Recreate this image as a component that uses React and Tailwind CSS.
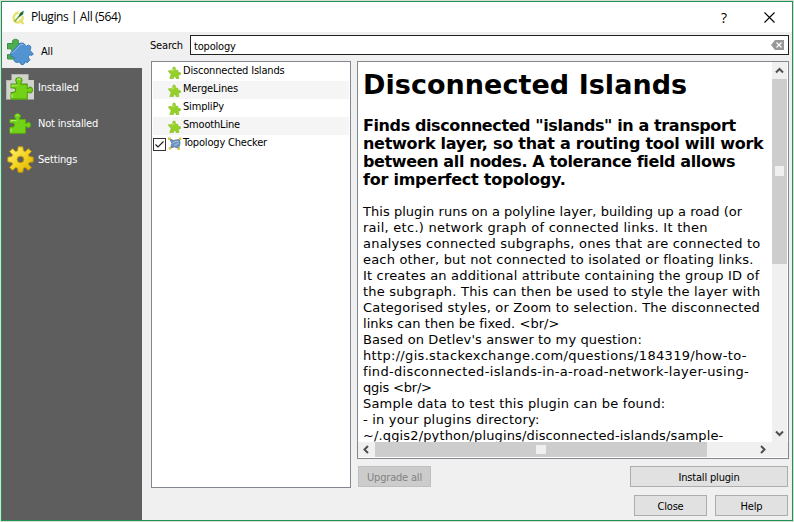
const ui = "font-['DejaVu_Sans_Condensed','DejaVu_Sans',sans-serif] [font-stretch:condensed] text-[11px] leading-[18px] tracking-[-0.18px] whitespace-nowrap";

const PUZZLE =
  "M1 6.5 H6.5 C7 5 5.5 4.5 5.5 3 C5.5 0 11.5 0 11.5 3 C11.5 4.5 10 5 10.5 6.5 H16.5 V10.5 C18 11 18 9 20 9.3 C22 10 22 14 20 14.5 C18 15 18 13 16.5 13.8 V20.3 H1 V14.5 C3 13.5 5.5 15 5.5 12 C5.5 9 3 10.5 1 9.8 Z";

function PuzzleIcon() {
  return (
    <svg className="h-[22px] w-[22px]" viewBox="0 0 22 22">
      <path d={PUZZLE} fill="#73d216" stroke="#58b010" />
      <path d="M2 9 V7.5 H7.5 M6.8 2.8 Q8.5 0.8 10 2.5 M2 15.5 V19.3" fill="none" stroke="#b4f070" />
    </svg>
  );
}

function SmallPuzzle() {
  return (
    <svg className="h-[13px] w-[13px]" viewBox="0 0 13 13">
      <path
        d="M5 4.2 C3.4 -0.2 8.6 -0.2 7.2 4.2 H10 L9.8 6.6 C13.6 5.2 13.6 10 10 8.8 L11 12.5 H8 C8 9.8 5.6 9.8 5.6 12.5 H1.8 L2.8 9.2 C4 7.4 1 7.8 0.4 4.8 Z"
        fill="#94cf2a"
        stroke="#84c01e"
        strokeWidth="0.6"
      />
      <path d="M5.4 2.4 L6 4.8 H2.4" fill="none" stroke="#b9e65c" strokeWidth="0.8" />
    </svg>
  );
}

function AllIcon() {
  return (
    <svg className="h-7 w-7" viewBox="0 0 28 28">
      <path d="M1.5 5.5 H7 C5.5 3 7 1.3 9.5 1.3 C12 1.3 13.5 3 12 5.5 H17 V21 H1.5 V16.5 C4 17 6 16.5 6 13.5 C6 10.5 4 10.5 1.5 11 Z" fill="#4fae54" stroke="#35903f" />
      <path
        d="M14.5 5 L17.5 5.3 L20.5 8.2 C22 6 26 7.5 24.5 11 L23.8 12.2 L27.3 16 L25.8 17.5 C23.5 16 21.5 18 22.8 20.3 L24 21.8 L21.5 24.5 L18.8 23.8 C19 27 15 27.6 14.3 25.4 L13.8 24 L10 24.4 L7.8 22.4 C9.3 19.5 7.5 18 5 18.8 L4.6 15 Z"
        fill="#5294d2"
        stroke="#3a78b8"
      />
      <path d="M6 15.3 L14.8 6.3 L17 6.5" fill="none" stroke="#93c0ea" />
    </svg>
  );
}

function InstalledIcon() {
  return (
    <svg className="h-7 w-7" viewBox="0 0 28 28">
      <path d="M5.5 0.5 H22.5 V6 H28 V25.5 H0 V6 H5.5 Z" fill="#d0d2cc" />
      <path d="M5.5 0.5 H22.5 M0.5 25 V6.5 H5" fill="none" stroke="#b4b6b0" />
      <svg x="4" y="3" width="23" height="24" viewBox="0 0 22 22" preserveAspectRatio="none">
        <path d={PUZZLE} fill="#73d216" stroke="#4e9a06" />
        <path d="M2 9 V7.5 H7.5 M6.8 2.8 Q8.5 0.8 10 2.5 M2 15.5 V19.3" fill="none" stroke="#b4f070" />
      </svg>
    </svg>
  );
}

function GearIcon() {
  return (
    <svg className="h-[27px] w-[27px]" viewBox="0 0 26 26">
      <defs>
        <linearGradient id="gold" x1="0" y1="0" x2="1" y2="1">
          <stop offset="0" stopColor="#fff47a" />
          <stop offset="0.55" stopColor="#f3d21e" />
          <stop offset="1" stopColor="#d9ac00" />
        </linearGradient>
      </defs>
      <path
        fillRule="evenodd"
        d="M10.8 0.8 H15.2 L15.8 4.6 L17.6 5.4 L20.6 2.6 L23.4 5.4 L20.6 8.4 L21.4 10.2 L25.2 10.8 V15.2 L21.4 15.8 L20.6 17.6 L23.4 20.6 L20.6 23.4 L17.6 20.6 L15.8 21.4 L15.2 25.2 H10.8 L10.2 21.4 L8.4 20.6 L5.4 23.4 L2.6 20.6 L5.4 17.6 L4.6 15.8 L0.8 15.2 V10.8 L4.6 10.2 L5.4 8.4 L2.6 5.4 L5.4 2.6 L8.4 5.4 L10.2 4.6 Z M13 9.8 A3.2 3.2 0 1 0 13 16.2 A3.2 3.2 0 1 0 13 9.8 Z"
        fill="url(#gold)"
        stroke="#c49a08"
        strokeWidth="0.9"
      />
    </svg>
  );
}

function QgisIcon() {
  return (
    <svg className="h-[15px] w-[13px] shrink-0" viewBox="0 0 13 15">
      <path d="M6.5 2.5 C2.5 3 1 7 2 10 C3.5 13.5 8 13 10 10.5 C10.8 9 10.8 7.5 10.3 6" fill="none" stroke="#e4e36a" strokeWidth="2.4" />
      <path d="M7.5 9.5 L11.5 14" stroke="#e6e070" strokeWidth="2.2" />
      <path d="M2.6 11.5 L8 5.2" stroke="#7fb04a" strokeWidth="1.6" />
      <path d="M6.2 7.5 L8 3 L11.8 0.6 L11 4.6 Z" fill="#1f6b34" />
    </svg>
  );
}

function TopologyIcon() {
  return (
    <svg className="h-[14px] w-[14px]" viewBox="0 0 14 14">
      <path d="M1.5 1.5 L5 3.5 L11.5 2.5 L12 6.5 L10.5 11.5 L6.5 9.8 L2.5 11 L4 6.5 Z" fill="#6d94c0" stroke="#4c6d96" strokeWidth="0.8" />
      <path d="M4.5 6 Q7 3.5 10.5 4.5 M6 8.5 L11 6" fill="none" stroke="#b5cbe2" strokeWidth="0.8" />
      <path d="M0 0.5h2.4v2.4h-2.4z M11 0.5h2.4v2.4h-2.4z M9.5 10.5h2.4v2.4h-2.4z M0.8 10h2.4v2.4h-2.4z" fill="#d3c843" />
    </svg>
  );
}

function Arrow({ d }) {
  return (
    <svg className="h-[9px] w-[9px]" viewBox="0 0 9 9">
      <path d={d} fill="none" stroke="#505050" strokeWidth="2" />
    </svg>
  );
}

function SideItem({ icon, label, active }) {
  return (
    <div className={`flex h-9 items-center pt-[3px] ${active ? "bg-[#f0f0f0] text-black" : "text-white"}`}>
      <div className="flex w-9 justify-center">{icon}</div>
      <span className={ui}>{label}</span>
    </div>
  );
}

function Button({ className, children, disabled }) {
  return (
    <button
      className={`${ui} flex h-[21px] items-center justify-center border pt-0.5 ${
        disabled ? "border-[#bfbfbf] bg-[#cccccc] text-[#838383]" : "border-[#adadad] bg-[#e1e1e1] text-black"
      } ${className}`}
    >
      {children}
    </button>
  );
}

const plugins = ["Disconnected Islands", "MergeLines", "SimpliPy", "SmoothLine"];

const summary = [
  ['Finds disconnected "islands" in a transport', "tracking-[-0.4px]"],
  ["network layer, so that a routing tool will work", "tracking-[-0.27px]"],
  ["between all nodes. A tolerance field allows", "tracking-[-0.38px]"],
  ["for imperfect topology.", "tracking-[-0.25px]"],
];

const about = [
  ["This plugin runs on a polyline layer, building up a road (or", "tracking-[0.04px]"],
  ["rail, etc.) network graph of connected links. It then", "tracking-[0.26px]"],
  ["analyses connected subgraphs, ones that are connected to", "tracking-[0.21px]"],
  ["each other, but not connected to isolated or floating links.", "tracking-[0.19px]"],
  ["It creates an additional attribute containing the group ID of", "tracking-[0.18px]"],
  ["the subgraph. This can then be used to style the layer with", "tracking-[0.21px]"],
  ["Categorised styles, or Zoom to selection. The disconnected", "tracking-[0.18px]"],
  ["links can then be fixed. <br/>", "tracking-[0.04px]"],
  ["Based on Detlev's answer to my question:", "tracking-[0.11px]"],
  ["http://gis.stackexchange.com/questions/184319/how-to-", "tracking-[0.32px]"],
  ["find-disconnected-islands-in-a-road-network-layer-using-", "tracking-[0.33px]"],
  ["qgis <br/>", "tracking-[-0.2px]"],
  ["Sample data to test this plugin can be found:", "tracking-[0.18px]"],
  ["- in your plugins directory:", "tracking-[0.2px]"],
  ["~/.qgis2/python/plugins/disconnected-islands/sample-", "tracking-[0.14px]"],
];

export default function App() {
  return (
    <div className="h-[522px] w-[794px] overflow-hidden bg-[#d9dcd9] p-px">
      <div className="flex h-[520px] w-[792px] flex-col border border-[#1f9150] bg-[#f0f0f0]">
        <header className="flex h-[30px] shrink-0 items-center bg-white pl-2.5">
          <QgisIcon />
          <h1 className="ml-1.5 font-['Open_Sans',sans-serif] text-[12px] tracking-[-0.42px] text-black">Plugins | All (564)</h1>
          <span className="ml-auto mr-0.5 w-3 text-center font-['Open_Sans',sans-serif] text-[14px]">?</span>
          <svg className="ml-8 mr-[17px] h-[11px] w-[11px]" viewBox="0 0 11 11">
            <path d="M0.5 0.5 L10.5 10.5 M10.5 0.5 L0.5 10.5" stroke="#000" strokeWidth="1.1" />
          </svg>
        </header>
        <div className="flex min-h-0 flex-1">
          <nav className="w-[140px] shrink-0 bg-[#5e5e5e]">
            <SideItem active icon={<AllIcon />} label={<span className="pl-[3px]">All</span>} />
            <SideItem icon={<InstalledIcon />} label="Installed" />
            <SideItem icon={<PuzzleIcon />} label="Not installed" />
            <SideItem icon={<GearIcon />} label="Settings" />
          </nav>
          <main className="flex flex-1 flex-col pl-[9px] pr-[3px] pt-[3px]">
            <div className="flex h-5 items-center">
              <label className={`${ui} -ml-px mr-px w-[39px] pt-0.5`}>Search</label>
              <div className="flex h-5 flex-1 items-center justify-between border border-[#222222] bg-white pl-[3px] pr-1">
                <span className={`${ui} pt-1`}>topology</span>
                <svg className="h-[10px] w-[13px]" viewBox="0 0 13 10">
                  <path d="M0 5 L4 0 H13 V10 H4 Z" fill="#989898" />
                  <path d="M5.5 2.5 L10.5 7.5 M10.5 2.5 L5.5 7.5" stroke="#fff" strokeWidth="1.1" />
                </svg>
              </div>
            </div>
            <div className="mt-1.5 flex gap-1.5">
              <section className="h-[427px] w-[200px] shrink-0 border border-[#828790] bg-white px-px pt-px">
                {plugins.map((name, i) => (
                  <div key={name} className={`flex h-[18px] items-center pl-[15px] ${i % 2 ? "bg-[#f5f5f5]" : ""}`}>
                    <div className="pt-px"><SmallPuzzle /></div>
                    <span className={`${ui} -mt-0.5 ml-0.5`}>{name}</span>
                  </div>
                ))}
                <div className="flex h-[18px] items-center">
                  <svg className="h-[13px] w-[13px]" viewBox="0 0 13 13">
                    <rect x="0.5" y="0.5" width="12" height="12" fill="#fff" stroke="#333" />
                    <path d="M2.5 6.5 L5 9 L10.5 3.5" fill="none" stroke="#222" strokeWidth="1.2" />
                  </svg>
                  <div className="ml-0.5 mr-px"><TopologyIcon /></div>
                  <span className={`${ui} -mt-0.5`}>Topology Checker</span>
                </div>
              </section>
              <div className="flex-1">
                <section className="flex h-[398px] flex-col border border-[#828790] bg-white">
                  <div className="flex h-[380px]">
                    <article className="flex-1 overflow-hidden whitespace-nowrap pl-[5px] font-['DejaVu_Sans',sans-serif] text-black">
                      <h2 className="mt-1.5 h-[34px] text-[27px] font-bold leading-[34px] tracking-[0.05px]">Disconnected Islands</h2>
                      <div className="mt-[15px] text-[16px] font-bold leading-[18px]">
                        {summary.map(([line, tracking]) => <div key={line} className={tracking}>{line}</div>)}
                      </div>
                      <div className="mt-[15px] text-[13px] leading-[16px]">
                        {about.map(([line, tracking]) => <div key={line} className={tracking}>{line}</div>)}
                      </div>
                    </article>
                    <div className="flex w-[15px] shrink-0 flex-col items-center bg-[#f0f0f0]">
                      <div className="flex h-[17px] items-center"><Arrow d="M1 6.5 L4.5 3 L8 6.5" /></div>
                      <div className="flex h-[185px] w-[15px] items-center justify-center bg-[#cdcdcd]">
                        <div className="mb-px h-[10px] w-[9px] bg-[#f0f0f0]" />
                      </div>
                      <div className="mt-auto flex h-[17px] items-center"><Arrow d="M1 2.5 L4.5 6 L8 2.5" /></div>
                    </div>
                    <div className="w-px shrink-0 bg-white" />
                  </div>
                  <div className="flex h-[15px] items-center bg-[#f0f0f0]">
                    <div className="flex w-[17px] justify-center"><Arrow d="M6 1 L2.5 4.5 L6 8" /></div>
                    <div className="flex h-[15px] w-[332px] items-center justify-center bg-[#cdcdcd]">
                      <div className="h-[9px] w-[10px] bg-[#f0f0f0]" />
                    </div>
                    <div className="ml-[51px]"><Arrow d="M3 1 L6.5 4.5 L3 8" /></div>
                  </div>
                </section>
                <div className="mt-[7px] flex justify-between pl-px pr-px">
                  <Button disabled className="w-[73px]">Upgrade all</Button>
                  <Button className="w-[158px]">Install plugin</Button>
                </div>
                <div className="mt-2 flex justify-end gap-2 pr-px">
                  <Button className="w-[73px]">Close</Button>
                  <Button className="w-[73px]">Help</Button>
                </div>
              </div>
            </div>
          </main>
        </div>
      </div>
    </div>
  );
}
